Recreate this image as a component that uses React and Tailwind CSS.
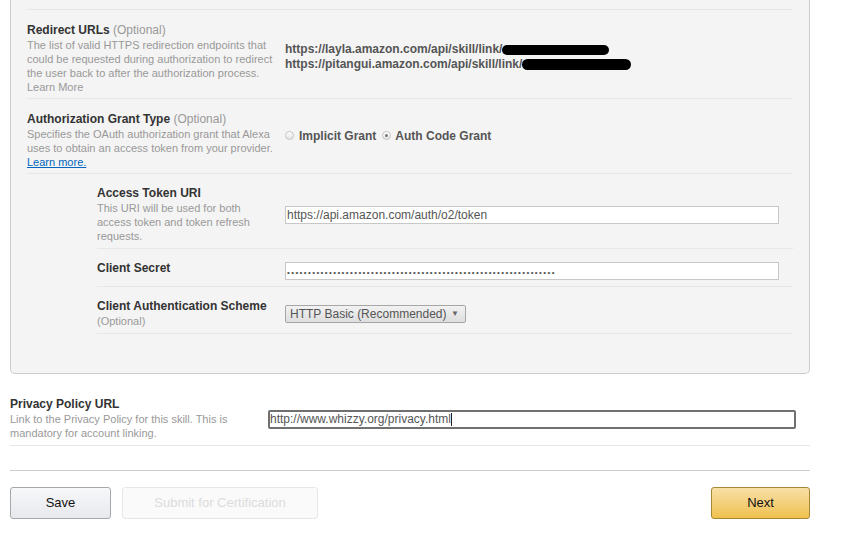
const Row = ({ nested, title, optional, children, right, rightClass = "", className = "" }) => (
  <div
    className={`flex items-start border-b border-[#e7e7e7] ${nested ? "ml-[70px]" : ""} ${className}`}
  >
    <div className={nested ? "w-[188px] pr-[12px] shrink-0" : "w-[258px] pr-[10px] shrink-0"}>
      <div className="text-[12px] leading-[16px] font-bold text-[#333]">
        {title}
        {optional && <span className="font-normal text-[#999]"> (Optional)</span>}
      </div>
      {children && <div className="text-[11px] leading-[14px] text-[#999]">{children}</div>}
    </div>
    <div className={`flex-1 ${rightClass}`}>{right}</div>
  </div>
);

const Radio = ({ checked }) => (
  <span className="inline-flex items-center justify-center w-[9px] h-[9px] rounded-full border border-[#c4c4c4] bg-gradient-to-b from-[#fff] to-[#e4e4e4]">
    {checked && <span className="w-[3px] h-[3px] rounded-full bg-[#777]" />}
  </span>
);

const TextBox = ({ children }) => (
  <div className="w-[494px] h-[18px] border border-[#c8c8c8] bg-white text-[12px] leading-[16px] text-[#555] pl-[1px] overflow-hidden whitespace-nowrap">
    {children}
  </div>
);

export default function App() {
  return (
    <div className="w-[842px] h-[534px] bg-white overflow-hidden font-['Liberation_Sans',Arial,sans-serif]">
      <div className="mx-[10px] w-[800px] bg-[#f4f4f4] border border-t-0 border-[#cccccc] rounded-b-[5px] px-[16px] h-[374px]">
        <div className="h-[10px] border-b border-[#e7e7e7]" />

        <Row
          title="Redirect URLs"
          optional
          className="pt-[12px] pb-[4px]"
          rightClass="mt-[20px]"
          right={
            <div className="text-[12px] leading-[15px] font-bold text-[#555]">
              <div className="flex items-center h-[15px]">
                https://layla.amazon.com/api/skill/link/
                <span className="inline-block w-[107px] h-[10px] rounded-full bg-black" />
              </div>
              <div className="flex items-center h-[15px]">
                https://pitangui.amazon.com/api/skill/link/
                <span className="inline-block w-[109px] h-[11px] rounded-full bg-black" />
              </div>
            </div>
          }
        >
          The list of valid HTTPS redirection endpoints that could be requested during
          authorization to redirect the user back to after the authorization process.
          <br />
          Learn More
        </Row>

        <Row
          title="Authorization Grant Type"
          optional
          className="pt-[12px] pb-[4px]"
          rightClass="mt-[17px]"
          right={
            <div className="flex items-center h-[15px] text-[12px] font-bold text-[#555]">
              <Radio />
              <span className="ml-[5px]">Implicit Grant</span>
              <span className="ml-[6px] flex">
                <Radio checked />
              </span>
              <span className="ml-[4px]">Auth Code Grant</span>
            </div>
          }
        >
          Specifies the OAuth authorization grant that Alexa uses to obtain an access token
          from your provider.
          <br />
          <a className="text-[#0066c0] underline">Learn more.</a>
        </Row>

        <Row
          nested
          title="Access Token URI"
          className="pt-[11px] pb-[5px]"
          rightClass="mt-[21px]"
          right={<TextBox>https://api.amazon.com/auth/o2/token</TextBox>}
        >
          This URI will be used for both access token and token refresh requests.
        </Row>

        <Row
          nested
          title="Client Secret"
          className="pt-[11px] pb-[6px]"
          rightClass="mt-[2px]"
          right={
            <TextBox>
              <span className="text-[8px] leading-[16px] tracking-[1.4px] text-[#555]">
                {"•".repeat(64)}
              </span>
            </TextBox>
          }
        />

        <Row
          nested
          title="Client Authentication Scheme"
          className="pt-[11px] pb-[5px]"
          rightClass="mt-[7px]"
          right={
            <div className="w-[181px] h-[18px] border border-[#a6a6a6] rounded-[2px] bg-gradient-to-b from-[#f2f2f2] to-[#dedede] flex items-center justify-between pl-[4px] pr-[6px] text-[12px] text-[#555]">
              <span>HTTP Basic (Recommended)</span>
              <span className="text-[8px] text-[#666]">▼</span>
            </div>
          }
        >
          (Optional)
        </Row>
      </div>

      <div className="mx-[10px] w-[800px]">
        <div className="flex items-start border-b border-[#e7e7e7] pt-[22px] pb-[5px]">
          <div className="w-[258px] shrink-0 pr-[10px]">
            <div className="text-[12px] leading-[16px] font-bold text-[#333]">
              Privacy Policy URL
            </div>
            <div className="text-[11px] leading-[14px] text-[#999]">
              Link to the Privacy Policy for this skill. This is mandatory for account linking.
            </div>
          </div>
          <div className="flex-1 mt-[14px]">
            <div className="w-[528px] h-[19px] border-2 border-[#707070] rounded-[2px] bg-white text-[12px] leading-[15px] text-[#555] flex items-center">
              http://www.whizzy.org/privacy.html
              <span className="inline-block w-px h-[13px] bg-[#222]" />
            </div>
          </div>
        </div>

        <div className="mt-[24px] border-t border-[#cccccc]" />

        <div className="flex items-center mt-[16px]">
          <button className="w-[101px] h-[32px] rounded-[3px] border border-[#a5a8ad] bg-gradient-to-b from-[#f7f8fa] to-[#e7e9ec] text-[13px] text-[#111]">
            Save
          </button>
          <button className="ml-[11px] w-[196px] h-[32px] rounded-[3px] border border-[#e7e7e7] bg-[#fafafa] text-[13px] text-[#dcdcdc]">
            Submit for Certification
          </button>
          <button className="ml-auto w-[99px] h-[32px] rounded-[3px] border border-[#a88734] bg-gradient-to-b from-[#f7dfa5] to-[#f0c14b] text-[13px] text-[#111]">
            Next
          </button>
        </div>
      </div>
    </div>
  );
}
